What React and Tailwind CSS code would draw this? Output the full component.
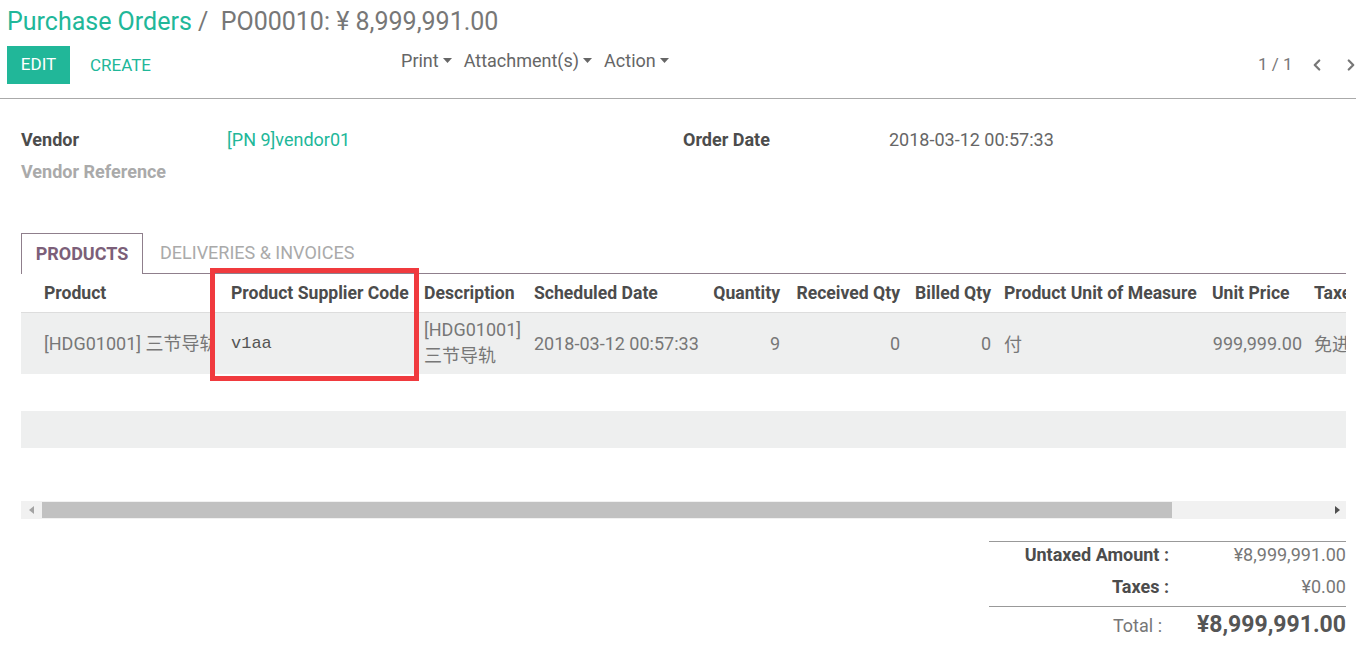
import { ChevronLeft, ChevronRight } from 'lucide-react';

const Caret = () => (
    <svg width="9" height="5" viewBox="0 0 9 5" className="ml-[4px] inline-block">
        <path d="M0 0 L9 0 L4.5 5 Z" fill="#666" />
    </svg>
);

const cols = [
    { w: 'w-[201px]', head: 'Product', pad: 'pl-[23px]' },
    { w: 'w-[194px]', head: 'Product Supplier Code', pad: 'pl-[9px]' },
    { w: 'w-[110px]', head: 'Description', pad: 'pl-[8px]' },
    { w: 'w-[173px]', head: 'Scheduled Date', pad: 'pl-[8px]' },
    { w: 'w-[89px]', head: 'Quantity', pad: 'pr-[8px]', right: true },
    { w: 'w-[120px]', head: 'Received Qty', pad: 'pr-[8px]', right: true },
    { w: 'w-[88px]', head: 'Billed Qty', pad: 'pr-[5px]', right: true },
    { w: 'w-[208px]', head: 'Product Unit of Measure', pad: 'pl-[8px]' },
    { w: 'w-[106px]', head: 'Unit Price', pad: 'pl-[8px]' },
    { w: 'w-[110px]', head: 'Taxes', pad: 'pl-[4px]' },
    { w: 'w-[110px]', head: 'Subtotal', pad: 'pl-[8px]' },
];

export default function App() {
    return (
        <div className="w-[1356px] h-[649px] overflow-hidden bg-white font-['Roboto',sans-serif] text-[#666]">
            {/* control panel */}
            <div className="border-b border-[#aaa] h-[99px] pl-[7px] relative">
                <div className="pt-[6px] text-[25px] leading-[32px] whitespace-nowrap">
                    <span className="text-[#21b799]">Purchase Orders</span>
                    <span className="text-[#777]"> /&nbsp; PO00010: ¥ 8,999,991.00</span>
                </div>
                <div className="flex items-start mt-[8px]">
                    <button className="bg-[#21b799] text-white text-[17px] h-[38px] w-[63px]">EDIT</button>
                    <button className="text-[#21b799] text-[17px] h-[38px] ml-[20px] mt-[1px]">CREATE</button>
                    <div className="flex items-center gap-[12px] ml-[250px] mt-[1px] text-[18px] text-[#666] whitespace-nowrap">
                        <span className="flex items-center">Print<Caret /></span>
                        <span className="flex items-center">Attachment(s)<Caret /></span>
                        <span className="flex items-center">Action<Caret /></span>
                    </div>
                </div>
                <div className="absolute left-[1258px] top-[52px] flex items-center text-[17px] text-[#777] whitespace-nowrap">
                    <span>1 / 1</span>
                    <ChevronLeft size={18} strokeWidth={3} className="ml-[15px] text-[#777]" />
                    <ChevronRight size={18} strokeWidth={3} className="ml-[16px] text-[#777]" />
                </div>
            </div>

            {/* form */}
            <div className="pl-[21px] pt-[28px]">
                <div className="flex text-[18px] leading-[26px]">
                    <div className="w-[206px] font-bold text-[#4c4c4c]">Vendor</div>
                    <div className="w-[456px] text-[#21b799]">[PN 9]vendor01</div>
                    <div className="w-[206px] font-bold text-[#4c4c4c]">Order Date</div>
                    <div>2018-03-12 00:57:33</div>
                </div>
                <div className="mt-[6px] text-[18px] leading-[26px] font-bold text-[#aaa]">Vendor Reference</div>

                {/* tabs */}
                <div className="mt-[48px] flex border-b border-[#8f7f8c] w-[1325px] h-[41px]">
                    <div className="w-[122px] h-[41px] border border-b-0 border-[#8f7f8c] bg-white text-center font-bold text-[18px] leading-[40px] text-[#7c5f79] -mb-px">
                        PRODUCTS
                    </div>
                    <div className="ml-[17px] text-[18px] leading-[40px] text-[#aaa]">DELIVERIES &amp; INVOICES</div>
                </div>

                {/* table */}
                <div className="relative w-[1325px]">
                    <div className="w-[1325px] overflow-hidden">
                        <table className="table-fixed border-collapse w-[1509px] text-[18px]">
                            <thead>
                                <tr className="h-[38px] border-b border-[#ddd]">
                                    {cols.map((c) => (
                                        <th key={c.head} className={`${c.w} ${c.pad} font-bold text-[17.6px] text-[#4c4c4c] whitespace-nowrap ${c.right ? 'text-right' : 'text-left'}`}>
                                            {c.head}
                                        </th>
                                    ))}
                                </tr>
                            </thead>
                            <tbody>
                                <tr className="h-[62px] bg-[#eeefef] text-[#777]">
                                    <td className="pl-[23px] pr-[9px]">
                                        <div className="whitespace-nowrap overflow-hidden">
                                            <span>[HDG01001] </span>
                                            <span className="font-['Noto_Sans_CJK_SC',sans-serif]">三节导轨</span>
                                        </div>
                                    </td>
                                    <td className="pl-[9px] font-['Liberation_Mono',monospace] text-[17px] text-[#555]">v1aa</td>
                                    <td className="pl-[8px] leading-[24px] whitespace-nowrap">
                                        [HDG01001]
                                        <br />
                                        <span className="font-['Noto_Sans_CJK_SC',sans-serif]">三节导轨</span>
                                    </td>
                                    <td className="pl-[8px] whitespace-nowrap">2018-03-12 00:57:33</td>
                                    <td className="pr-[8px] text-right">9</td>
                                    <td className="pr-[8px] text-right">0</td>
                                    <td className="pr-[5px] text-right">0</td>
                                    <td className="pl-[8px] font-['Noto_Sans_CJK_SC',sans-serif]">付</td>
                                    <td className="pr-[8px] text-right">999,999.00</td>
                                    <td className="pl-[4px] font-['Noto_Sans_CJK_SC',sans-serif] whitespace-nowrap overflow-hidden">免进口关税</td>
                                    <td className="pr-[8px] text-right">8,999,991.00</td>
                                </tr>
                                <tr className="h-[37px]"><td colSpan={11}></td></tr>
                                <tr className="h-[37px] bg-[#eeefef]"><td colSpan={11}></td></tr>
                                <tr className="h-[37px]"><td colSpan={11}></td></tr>
                            </tbody>
                        </table>
                    </div>

                    {/* highlight */}
                    <div className="absolute left-[189px] -top-[6px] w-[209px] h-[113px] border-[5px] border-[#f03a3e] pointer-events-none" />

                    {/* scrollbar */}
                    <div className="mt-[16px] h-[18px] bg-[#f1f1f1] flex items-center">
                        <svg width="21" height="18" viewBox="0 0 21 18">
                            <path d="M13 5 L8 9 L13 13 Z" fill="#a3a3a3" />
                        </svg>
                        <div className="w-[1130px] h-[16px] bg-[#c1c1c1]" />
                        <div className="flex-1" />
                        <svg width="21" height="18" viewBox="0 0 21 18">
                            <path d="M10 5 L15 9 L10 13 Z" fill="#505050" />
                        </svg>
                    </div>
                </div>

                {/* totals */}
                <div className="ml-[968px] w-[357px] mt-[22px] border-t border-[#999] text-[18px]">
                    <div className="flex h-[24px] items-center">
                        <div className="w-[180px] text-right font-bold text-[#4c4c4c]">Untaxed Amount :</div>
                        <div className="flex-1 text-right text-[#777]">¥8,999,991.00</div>
                    </div>
                    <div className="flex h-[40px] items-center">
                        <div className="w-[180px] text-right font-bold text-[#4c4c4c]">Taxes :</div>
                        <div className="flex-1 text-right text-[#777]">¥0.00</div>
                    </div>
                    <div className="border-t border-[#999] flex h-[38px] items-center">
                        <div className="w-[173px] text-right text-[#777]">Total :</div>
                        <div className="flex-1 text-right font-bold text-[23px] text-[#555]">¥8,999,991.00</div>
                    </div>
                </div>
            </div>
        </div>
    );
}
